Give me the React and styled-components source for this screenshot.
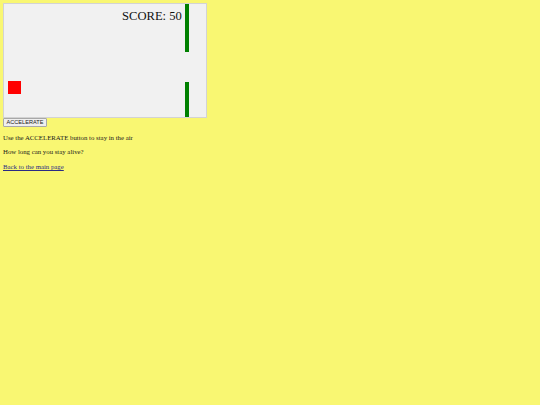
import React from "react";
import styled, { createGlobalStyle } from "styled-components";

const Global = createGlobalStyle`
  html, body { background: #f9f772; }
  body {
    margin: 3px;
    font-family: "Liberation Serif", "Times New Roman", serif;
    font-size: 6.8px;
    color: #1a1a1a;
  }
`;

const Page = styled.div`
  display: flex;
  flex-direction: column;
  align-items: flex-start;
`;

const Canvas = styled.div`
  position: relative;
  width: 202px;
  height: 113px;
  border: 1px solid #d3d3d3;
  background: #f1f1f1;
  overflow: hidden;
`;

const Piece = styled.div`
  position: absolute;
  background: ${(p) => p.$color};
`;

const Score = styled.div`
  position: absolute;
  left: 118px;
  top: 5px;
  font-family: "Liberation Serif", "Times New Roman", serif;
  font-size: 12.6px;
  line-height: 14px;
  color: #111;
  white-space: nowrap;
`;

const Button = styled.button`
  margin: 0;
  padding: 0 2px;
  height: 9px;
  width: 44px;
  font-family: "Liberation Sans", Arial, sans-serif;
  font-size: 5.6px;
  line-height: 7px;
  color: #222;
  background: #efefef;
  border: 1px solid #a8a8a8;
  border-radius: 1px;
  box-sizing: border-box;
`;

const Para = styled.p`
  margin: 6.8px 0 0 0;
  line-height: 7.8px;
  font-size: 6.8px;
`;

const Link = styled.a`
  color: #2b2b85;
  text-decoration: underline;
`;

export default function App() {
  return (
    <>
      <Global />
      <Page>
        <Canvas>
          <Score>SCORE: 50</Score>
          <Piece $color="#ff0000" style={{ left: 4, top: 77, width: 13, height: 13 }} />
          <Piece $color="#008000" style={{ left: 181, top: 0, width: 4.3, height: 48 }} />
          <Piece $color="#008000" style={{ left: 181, top: 78, width: 4.3, height: 40 }} />
        </Canvas>
        <Button>ACCELERATE</Button>
        <Para>Use the ACCELERATE button to stay in the air</Para>
        <Para>How long can you stay alive?</Para>
        <Para>
          <Link href="#">Back to the main page</Link>
        </Para>
      </Page>
    </>
  );
}
